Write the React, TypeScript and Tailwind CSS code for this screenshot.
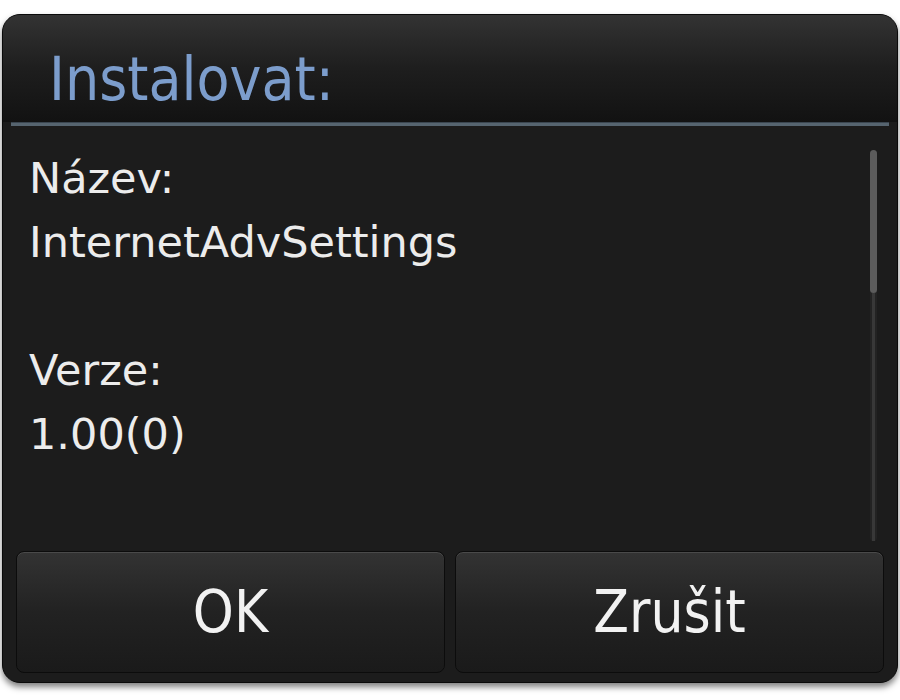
import React from "react";

const body = { fontFamily: '"DejaVu Sans", "Liberation Sans", sans-serif' };
const narrow = { fontFamily: '"DejaVu Sans Condensed", "DejaVu Sans", sans-serif', fontStretch: "condensed" as const };

function DialogButton({ label }: { label: string }) {
  return (
    <button
      className="flex-1 h-full rounded-[8px] border border-[#0c0c0c] bg-gradient-to-b from-[#333333] via-[#222222] to-[#1a1a1a] shadow-[inset_0_1px_0_#4a4a4a] flex items-center justify-center text-[58px] leading-none text-[#f2f2f2]"
      style={narrow}
    >
      {label}
    </button>
  );
}

export default function App() {
  return (
    <div className="w-[900px] h-[700px] bg-white pt-[14px] px-[2px]">
      <div className="h-[669px] rounded-[18px] bg-[#1c1c1c] border border-[#0a0a0a] shadow-[0_4px_6px_rgba(0,0,0,0.5)] flex flex-col overflow-hidden">
        {/* Title */}
        <div className="h-[107px] bg-gradient-to-b from-[#333333] via-[#1e1e1e] to-[#121212] pt-[34px] pl-[46px]">
          <div className="text-[60px] leading-none text-[#7c9dcc]" style={narrow}>
            Instalovat:
          </div>
        </div>
        <div className="mx-[8px] h-[4px] bg-[#56646f] border-t border-[#3b4650]" />

        {/* Content */}
        <div className="flex-1 flex pl-[26px] pr-[20px] pt-[20px]">
          <div className="flex-1 text-[43px] leading-[64px] text-[#ececec]" style={body}>
            <div>Název:</div>
            <div>InternetAdvSettings</div>
            <div>&nbsp;</div>
            <div>Verze:</div>
            <div>1.00(0)</div>
          </div>
          <div className="w-[7px] mt-[4px] mb-[6px] flex flex-col items-center bg-[#232323] rounded-full">
            <div className="w-[7px] h-[143px] rounded-full bg-[#5c5c5c]" />
            <div className="w-[3px] flex-1 bg-[#383838]" />
          </div>
        </div>

        {/* Buttons */}
        <div className="h-[122px] flex gap-[10px] px-[13px] mb-[9px] mt-[4px]">
          <DialogButton label="OK" />
          <DialogButton label="Zrušit" />
        </div>
      </div>
    </div>
  );
}
